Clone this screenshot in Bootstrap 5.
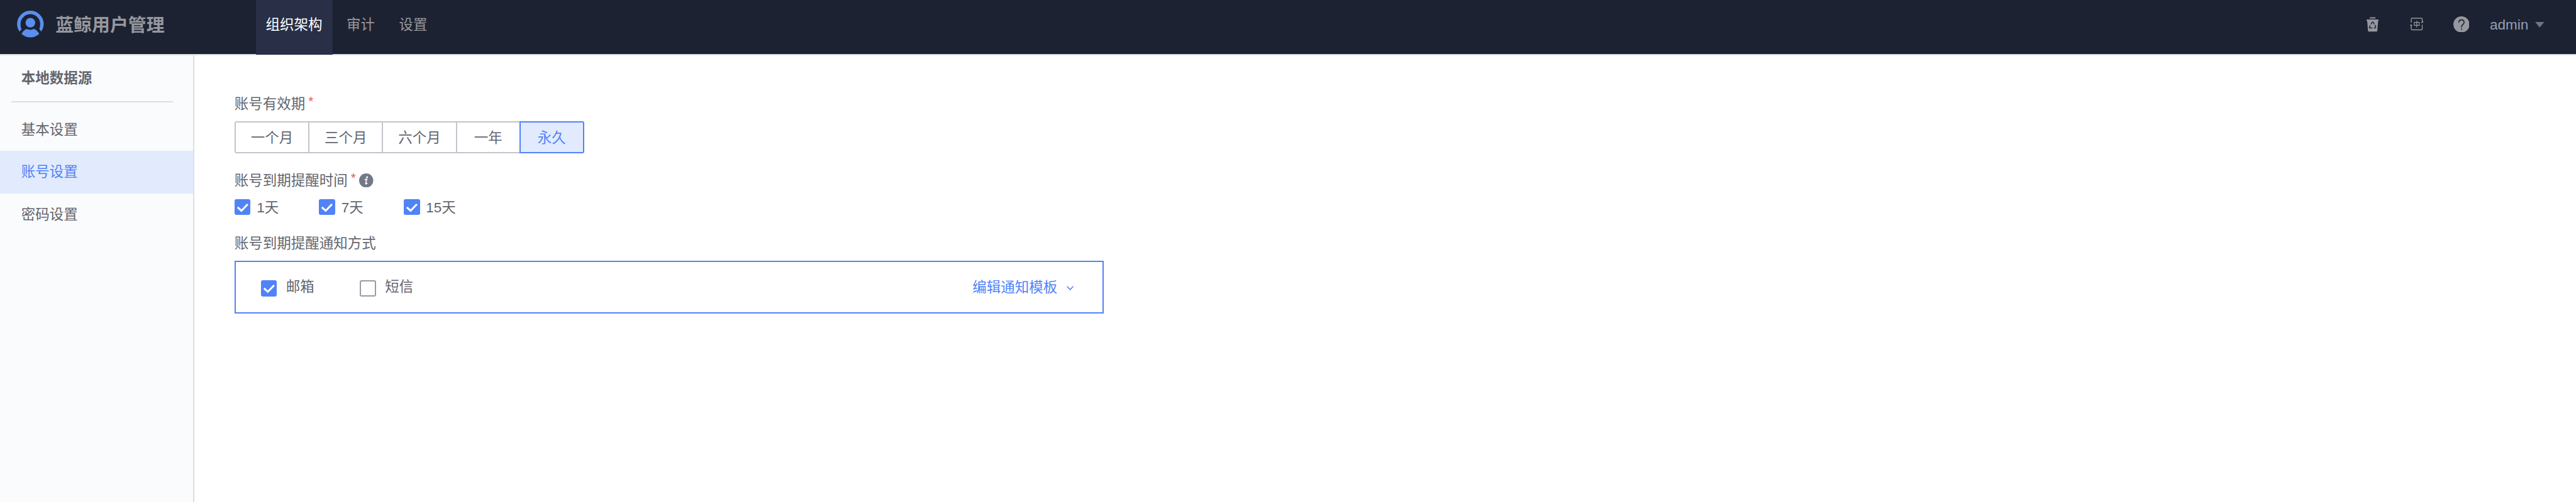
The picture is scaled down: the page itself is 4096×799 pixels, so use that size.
<!DOCTYPE html>
<html lang="zh-CN">
<head>
<meta charset="utf-8">
<title>蓝鲸用户管理</title>
<link href="https://cdn.jsdelivr.net/npm/bootstrap@5.3.0/dist/css/bootstrap.min.css" rel="stylesheet">
<style>
/* 1rem = 10 layout units */
html { font-size: 16.069px; }
body {
  font-family: "Liberation Sans", "Noto Sans CJK SC", sans-serif;
  font-size: 1.4rem; line-height: 2rem; color: #63656e; background: #fff;
  height: 100vh; overflow: hidden;
}
svg { display: block; flex: none; }
.topbar { height: 5.5rem; background: #1c2231; border-bottom: 2px solid #dcdee5; padding-left: 1.7rem; color: #979ba5; }
.topbar .row-mid { height: 4.8rem; }
.brand-name { font-size: 1.8rem; font-weight: 700; color: #96979f; margin-left: 1.14rem; padding-top: .13rem; }
.brand-area { width: 23.6rem; }
.top-tab { height: 5.4rem; line-height: 4.92rem; padding: 0 1rem; color: #96979f; margin-right: .4rem; text-decoration: none; }
.top-tab.active { background: #282f47; color: #fff; }
.user-name { color: #979fb9; margin-left: 2.03rem; padding-top: .16rem; }
.side { width: 19.2rem; background: #fafbfd; border-right: 2px solid #dcdee5; }
.side-title { height: 4.65rem; line-height: 4.6rem; padding-left: 1rem; margin-left: 1.1rem; width: 16rem; border-bottom: 2px solid #dcdee5; font-weight: 700; }
.side-item { height: 4.2rem; line-height: 4.18rem; padding-left: 2.1rem; color: #63656e; text-decoration: none; }
.side-item.active { background: #e1ebfd; color: #5183f8; }
.main-pane { padding: 3.75rem 0 0 4rem; }
.lbl { padding-top: .1rem; margin-bottom: -.1rem; }
.star { color: #ea5a54; font-size: 1.3rem; line-height: 1.5rem; height: 2rem; margin-left: .32rem; }
.period .seg { height: 3.2rem; line-height: calc(3.3rem - 4px); width: calc(7.3rem + 2px); border: 2px solid #c4c4cc; margin-right: -2px; text-align: center; }
.period { margin-top: .75rem; }
.period .seg.short { width: calc(6.3rem + 2px); }
.period .seg:first-child { border-radius: 3px 0 0 3px; }
.period .seg.active { border-color: #5183f8; background: #e1ebfd; color: #5183f8; border-radius: 0 3px 3px 0; width: 6.4rem; position: relative; }
.tick { width: 1.6rem; height: 1.6rem; border-radius: 3px; flex: none; }
.tick.on { background: #5183f8; }
.tick.off { border: 2px solid #979ba5; }
.tick svg { width: 100%; height: 100%; }
.days { margin-top: .65rem; gap: 4rem; }
.days .lbl { margin-left: .6rem; }
.notice { width: 86rem; height: 5.25rem; border: 2px solid #5183f8; padding: 0 2.8rem 0 2.48rem; margin-top: .75rem; }
.notice .tick { margin-top: .25rem; }
.edit-link { color: #5183f8; text-decoration: none; padding-top: .18rem; }
</style>
</head>
<body class="d-flex flex-column">
<header class="topbar d-flex justify-content-between flex-shrink-0">
  <div class="d-flex">
    <div class="brand-area row-mid d-flex align-items-center">
      <svg style="width:2.65rem;height:2.65rem" viewBox="0 0 53 53" fill="#5b8eee">
        <path d="M5 41.5A26.3 26.3 0 1 1 48 41.5L44.2 36.5Q46 32 46 26.5A19.5 19.5 0 1 0 7 26.5Q7 32 9 37Z"/>
        <circle cx="26.5" cy="23.8" r="9.6"/>
        <path d="M19 36.2Q26.5 39.5 34 36.2Q40 38.5 44 46Q36 53 26.5 53Q17 53 9 46Q13 38.5 19 36.2Z"/>
      </svg>
      <span class="brand-name">蓝鲸用户管理</span>
    </div>
    <nav class="d-flex">
      <a class="top-tab active" href="#">组织架构</a>
      <a class="top-tab" href="#">审计</a>
      <a class="top-tab" href="#">设置</a>
    </nav>
  </div>
  <div class="row-mid d-flex align-items-center" style="padding-right:3.15rem">
    <svg style="width:1.2rem;height:1.5rem" viewBox="0 0 24 30" fill="#96979f">
      <path d="M6.500 .5h11v2.500h-11zM0 5h24v2.800h-1.200L21.300 27Q21 29 19.500 29H4.500Q3 29 2.800 27L1.200 7.800H0z"/>
      <path d="M8.500 14.500L11.300 10.200H13L15.500 14.500M16.500 16L18.300 19.500 17 21.700H14.500M11.500 21.700H6L5.500 20.500 7.500 16.800" fill="none" stroke="#1c2231" stroke-width="1.800"/>
    </svg>
    <svg style="width:1.35rem;height:1.3rem;margin-left:3.13rem" viewBox="0 0 27 26" fill="none" stroke="#96979f" stroke-width="1.700">
      <path d="M2.500 10V3Q2.500 1.200 4.300 1.200H22.500Q24.300 1.200 24.300 3V10.500M24.300 14V22.500Q24.300 24.300 22.500 24.300H4.300Q2.500 24.300 2.500 22.500V15.500M.5 15.500H4.200M22.500 10.500L26.500 8M.5 15.500L3 13.800"/>
      <path d="M8.500 9.500H18.500V15.500H8.500ZM13.500 6.200V19.500" stroke-width="1.500"/>
    </svg>
    <svg style="width:1.6rem;height:1.6rem;margin-left:2.9rem" viewBox="0 0 32 32">
      <circle cx="16" cy="16" r="16" fill="#96979f"/>
      <path d="M10.800 12.500Q10.800 7 16 7T21.200 12Q21.200 14.200 18.600 16.400Q16.100 18.500 16.100 22" fill="none" stroke="#1c2231" stroke-width="2"/>
      <circle cx="16.100" cy="25.500" r="1.300" fill="#1c2231"/>
    </svg>
    <span class="user-name">admin</span>
    <svg style="width:.9rem;height:.55rem;margin:.1rem 0 0 .67rem" viewBox="0 0 18 11"><path d="M0 0H18L9 11Z" fill="#73767f"/></svg>
  </div>
</header>
<div class="d-flex flex-grow-1">
  <aside class="side d-flex flex-column">
    <div class="side-title">本地数据源</div>
    <nav class="d-flex flex-column" style="margin-top:.6rem">
      <a class="side-item" href="#">基本设置</a>
      <a class="side-item active" href="#">账号设置</a>
      <a class="side-item" href="#">密码设置</a>
    </nav>
  </aside>
  <main class="main-pane">
    <div class="d-flex"><span class="lbl">账号有效期</span><span class="star">*</span></div>
    <div class="period d-flex">
      <div class="seg">一个月</div><div class="seg">三个月</div><div class="seg">六个月</div><div class="seg short">一年</div><div class="seg active">永久</div>
    </div>
    <div class="d-flex align-items-center" style="margin-top:1.65rem">
      <span class="lbl">账号到期提醒时间</span><span class="star">*</span>
      <svg style="width:1.4rem;height:1.4rem;margin-left:.33rem" viewBox="0 0 28 28">
        <circle cx="14" cy="14" r="14" fill="#737987"/>
        <circle cx="15.700" cy="7.600" r="1.900" fill="#fff"/>
        <path d="M11 12.300L15.200 11.500L13 19.500Q12.600 21.300 14 20.800Q15.200 20.200 16.300 18.700" fill="none" stroke="#fff" stroke-width="2"/>
      </svg>
    </div>
    <div class="days d-flex">
      <div class="d-flex align-items-center"><div class="tick on"><svg viewBox="0 0 32 32"><path d="M6 16L13.500 23L26 10" fill="none" stroke="#fff" stroke-width="3.800"/></svg></div><span class="lbl">1天</span></div>
      <div class="d-flex align-items-center"><div class="tick on"><svg viewBox="0 0 32 32"><path d="M6 16L13.500 23L26 10" fill="none" stroke="#fff" stroke-width="3.800"/></svg></div><span class="lbl">7天</span></div>
      <div class="d-flex align-items-center"><div class="tick on"><svg viewBox="0 0 32 32"><path d="M6 16L13.500 23L26 10" fill="none" stroke="#fff" stroke-width="3.800"/></svg></div><span class="lbl">15天</span></div>
    </div>
    <div class="d-flex" style="margin-top:1.55rem"><span class="lbl">账号到期提醒通知方式</span></div>
    <div class="notice d-flex align-items-center justify-content-between">
      <div class="d-flex" style="gap:4.5rem">
        <div class="d-flex align-items-center"><div class="tick on"><svg viewBox="0 0 32 32"><path d="M6 16L13.500 23L26 10" fill="none" stroke="#fff" stroke-width="3.800"/></svg></div><span style="margin-left:.9rem">邮箱</span></div>
        <div class="d-flex align-items-center"><div class="tick off"></div><span style="margin-left:.9rem">短信</span></div>
      </div>
      <a class="edit-link d-flex align-items-center" href="#">编辑通知模板
        <svg style="width:.7rem;height:.45rem;margin-left:.95rem" viewBox="0 0 14 9"><path d="M1 1L7 7.500L13 1" fill="none" stroke="#5183f8" stroke-width="2"/></svg>
      </a>
    </div>
  </main>
</div>
<script src="https://cdn.jsdelivr.net/npm/bootstrap@5.3.0/dist/js/bootstrap.bundle.min.js"></script>
</body>
</html>
